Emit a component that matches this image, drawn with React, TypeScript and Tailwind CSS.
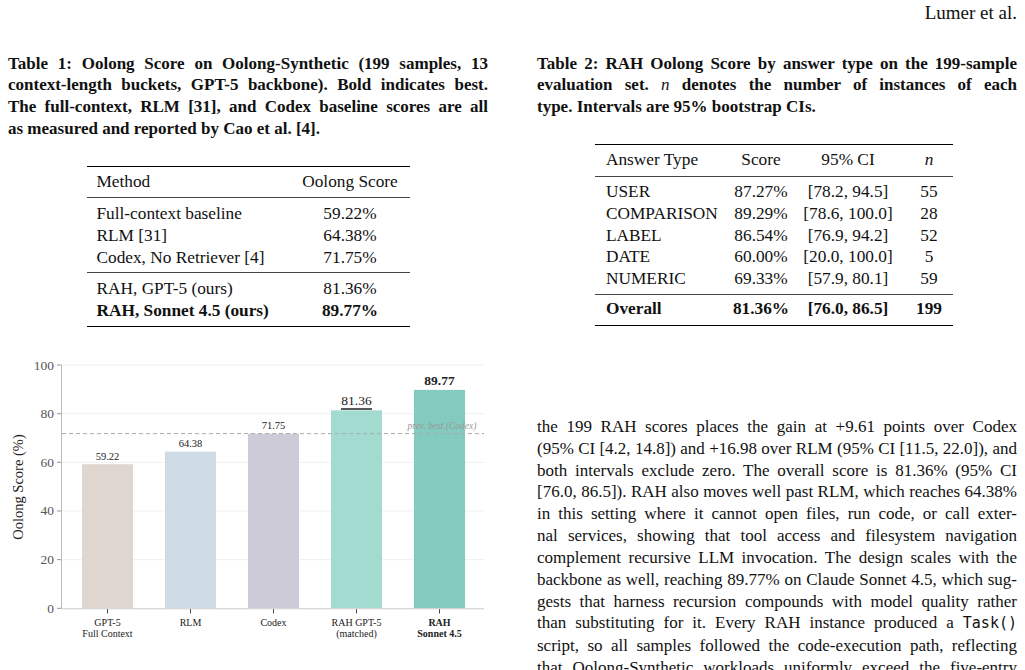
import React from 'react';

type Bar = { label: string[]; value: number; color: string; best?: boolean };

const bars: Bar[] = [
    { label: ['GPT-5', 'Full Context'], value: 59.22, color: '#e0d6d0' },
    { label: ['RLM'], value: 64.38, color: '#cedbe4' },
    { label: ['Codex'], value: 71.75, color: '#cdcbd7' },
    { label: ['RAH GPT-5', '(matched)'], value: 81.36, color: '#a3dbd0' },
    { label: ['RAH', 'Sonnet 4.5'], value: 89.77, color: '#83cbbe', best: true },
];

const table1 = [
    [['Full-context baseline', '59.22%'], ['RLM [31]', '64.38%'], ['Codex, No Retriever [4]', '71.75%']],
    [['RAH, GPT-5 (ours)', '81.36%']],
];

const table2 = [
    ['USER', '87.27%', '[78.2, 94.5]', '55'],
    ['COMPARISON', '89.29%', '[78.6, 100.0]', '28'],
    ['LABEL', '86.54%', '[76.9, 94.2]', '52'],
    ['DATE', '60.00%', '[20.0, 100.0]', '5'],
    ['NUMERIC', '69.33%', '[57.9, 80.1]', '59'],
];

const SERIF = "'Liberation Serif', Tinos, 'Times New Roman', 'DejaVu Serif', serif";

// one justified line of a typeset paragraph
const Line: React.FC<{ children: React.ReactNode; last?: boolean }> = ({ children, last }) => (
    <div className={last ? 'text-left' : 'text-justify [text-align-last:justify]'}>{children}</div>
);

const yOf = (v: number) => 608.3 - v * 2.433;

const Chart: React.FC = () => {
    const ticks = [0, 20, 40, 60, 80, 100];
    return (
        <svg width={480} height={300} className="block" fontFamily={SERIF}>
            <g transform="translate(-8,-350)">
                {ticks.map(t => (
                    <g key={t}>
                        {t > 0 && <line x1={62} x2={484} y1={yOf(t)} y2={yOf(t)} stroke="#f0f0f0" strokeWidth={1} />}
                        <line x1={57} x2={61.5} y1={yOf(t)} y2={yOf(t)} stroke="#999" strokeWidth={1} />
                        <text x={54} y={yOf(t) + 4.5} textAnchor="end" fontSize={13.5} fill="#555">{t}</text>
                    </g>
                ))}
                <text
                    transform="translate(23,487) rotate(-90)"
                    textAnchor="middle"
                    fontSize={14.5}
                    fill="#222"
                >
                    Oolong Score (%)
                </text>

                {bars.map((b, i) => {
                    const x = 82 + i * 83;
                    const cx = x + 25.5;
                    const top = yOf(b.value);
                    const big = i >= 3;
                    return (
                        <g key={b.label.join()}>
                            <rect x={x} y={top} width={51} height={608.3 - top} fill={b.color} />
                            <text
                                x={cx}
                                y={top - (big ? 5 : 4.5)}
                                textAnchor="middle"
                                fontSize={big ? 13.5 : 10.5}
                                fontWeight={b.best ? 700 : 400}
                                fill="#222"
                            >
                                {b.value.toFixed(2)}
                            </text>
                            <line x1={cx} x2={cx} y1={609} y2={613.5} stroke="#444" strokeWidth={1} />
                            {b.label.map((l, j) => (
                                <text
                                    key={l}
                                    x={cx}
                                    y={626 + j * 11}
                                    textAnchor="middle"
                                    fontSize={10}
                                    fontWeight={b.best ? 700 : 400}
                                    fill="#222"
                                >
                                    {l}
                                </text>
                            ))}
                        </g>
                    );
                })}

                <line x1={341} x2={372} y1={409} y2={409} stroke="#222" strokeWidth={1.5} />
                <line x1={62} x2={484} y1={433.6} y2={433.6} stroke="#aaa" strokeWidth={1} strokeDasharray="4 3" />
                <text x={442} y={429} textAnchor="middle" fontSize={9.5} fontStyle="italic" fill="#999">
                    prev. best (Codex)
                </text>

                <line x1={61.5} x2={61.5} y1={365} y2={608.8} stroke="#bbb" strokeWidth={1} />
                <line x1={61} x2={484} y1={608.8} y2={608.8} stroke="#ccc" strokeWidth={1} />
            </g>
        </svg>
    );
};

export default function App() {
    return (
        <div className="w-[1025px] h-[670px] overflow-hidden bg-white text-[#111] font-[family-name:'Liberation_Serif',Tinos,'Times_New_Roman','DejaVu_Serif',serif]">
            <div className="flex justify-end pr-2 pt-[2px] text-[19px] leading-[22px]">Lumer et al.</div>

            <div className="flex pl-2 gap-[49px] mt-[28.5px]">
                {/* left column */}
                <div className="w-[480px]">
                    <div className="font-bold text-[17px] leading-[21.8px]">
                        <Line>Table 1: Oolong Score on Oolong-Synthetic (199 samples, 13</Line>
                        <Line>context-length buckets, GPT-5 backbone). Bold indicates best.</Line>
                        <Line>The full-context, RLM [31], and Codex baseline scores are all</Line>
                        <Line last>as measured and reported by Cao et al. [4].</Line>
                    </div>

                    <div className="mx-auto mt-[26px] w-[323px] text-[17.3px] leading-[21.7px] border-t-[1.5px] border-b-[1.5px] border-black">
                        <div className="grid grid-cols-[214px_109px] pt-[4px] pb-[4.5px] leading-[22px]">
                            <div className="pl-[10px]">Method</div>
                            <div className="pr-[10px] text-center">Oolong Score</div>
                        </div>
                        {table1.map((group, gi) => (
                            <div key={gi} className={`border-t border-[#444] pt-[5px] ${gi === 0 ? 'pb-[4px]' : 'pb-[4.5px]'}`}>
                                {group.map(([m, s]) => (
                                    <div key={m} className="grid grid-cols-[214px_109px]">
                                        <div className="pl-[10px]">{m}</div>
                                        <div className="pr-[10px] text-center">{s}</div>
                                    </div>
                                ))}
                                {gi === 1 && (
                                    <div className="grid grid-cols-[214px_109px] font-bold">
                                        <div className="pl-[10px]">RAH, Sonnet 4.5 (ours)</div>
                                        <div className="pr-[10px] text-center">89.77%</div>
                                    </div>
                                )}
                            </div>
                        ))}
                    </div>

                    <div className="mt-[23px]">
                        <Chart />
                    </div>
                </div>

                {/* right column */}
                <div className="w-[480px]">
                    <div className="font-bold text-[17px] leading-[21.8px]">
                        <Line>Table 2: RAH Oolong Score by answer type on the 199-sample</Line>
                        <Line>
                            evaluation set. <span className="italic font-normal">n</span> denotes the number of instances of each
                        </Line>
                        <Line last>type. Intervals are 95% bootstrap CIs.</Line>
                    </div>

                    <div className="ml-[58px] mt-[26.5px] w-[358px] text-[17.3px] leading-[21.6px] border-t-[1.5px] border-b-[1.5px] border-black">
                        <div className="grid grid-cols-[136px_60px_114px_48px] pt-[4px] pb-[4.5px] leading-[22px]">
                            <div className="pl-[11px]">Answer Type</div>
                            <div className="text-center">Score</div>
                            <div className="text-center">95% CI</div>
                            <div className="text-center italic">n</div>
                        </div>
                        <div className="border-t border-[#444] pt-[4.5px] pb-[4.5px]">
                            {table2.map(r => (
                                <div key={r[0]} className="grid grid-cols-[136px_60px_114px_48px]">
                                    <div className="pl-[11px]">{r[0]}</div>
                                    <div className="text-center">{r[1]}</div>
                                    <div className="text-center">{r[2]}</div>
                                    <div className="text-center">{r[3]}</div>
                                </div>
                            ))}
                        </div>
                        <div className="border-t border-[#444] pt-[3.5px] pb-[5px] font-bold">
                            <div className="grid grid-cols-[136px_60px_114px_48px]">
                                <div className="pl-[11px]">Overall</div>
                                <div className="text-center">81.36%</div>
                                <div className="text-center">[76.0, 86.5]</div>
                                <div className="text-center">199</div>
                            </div>
                        </div>
                    </div>

                    <div className="mt-[90px] text-[17px] leading-[21.83px]">
                        <Line>the 199 RAH scores places the gain at +9.61 points over Codex</Line>
                        <Line>(95% CI [4.2, 14.8]) and +16.98 over RLM (95% CI [11.5, 22.0]), and</Line>
                        <Line>both intervals exclude zero. The overall score is 81.36% (95% CI</Line>
                        <Line>[76.0, 86.5]). RAH also moves well past RLM, which reaches 64.38%</Line>
                        <Line>in this setting where it cannot open files, run code, or call exter-</Line>
                        <Line>nal services, showing that tool access and filesystem navigation</Line>
                        <Line>complement recursive LLM invocation. The design scales with the</Line>
                        <Line>backbone as well, reaching 89.77% on Claude Sonnet 4.5, which sug-</Line>
                        <Line>gests that harness recursion compounds with model quality rather</Line>
                        <Line>
                            than substituting for it. Every RAH instance produced a{' '}
                            <span className="font-[family-name:'DejaVu_Sans_Mono',monospace] text-[15px]">Task()</span>
                        </Line>
                        <Line>script, so all samples followed the code-execution path, reflecting</Line>
                        <Line>that Oolong-Synthetic workloads uniformly exceed the five-entry</Line>
                    </div>
                </div>
            </div>
        </div>
    );
}
